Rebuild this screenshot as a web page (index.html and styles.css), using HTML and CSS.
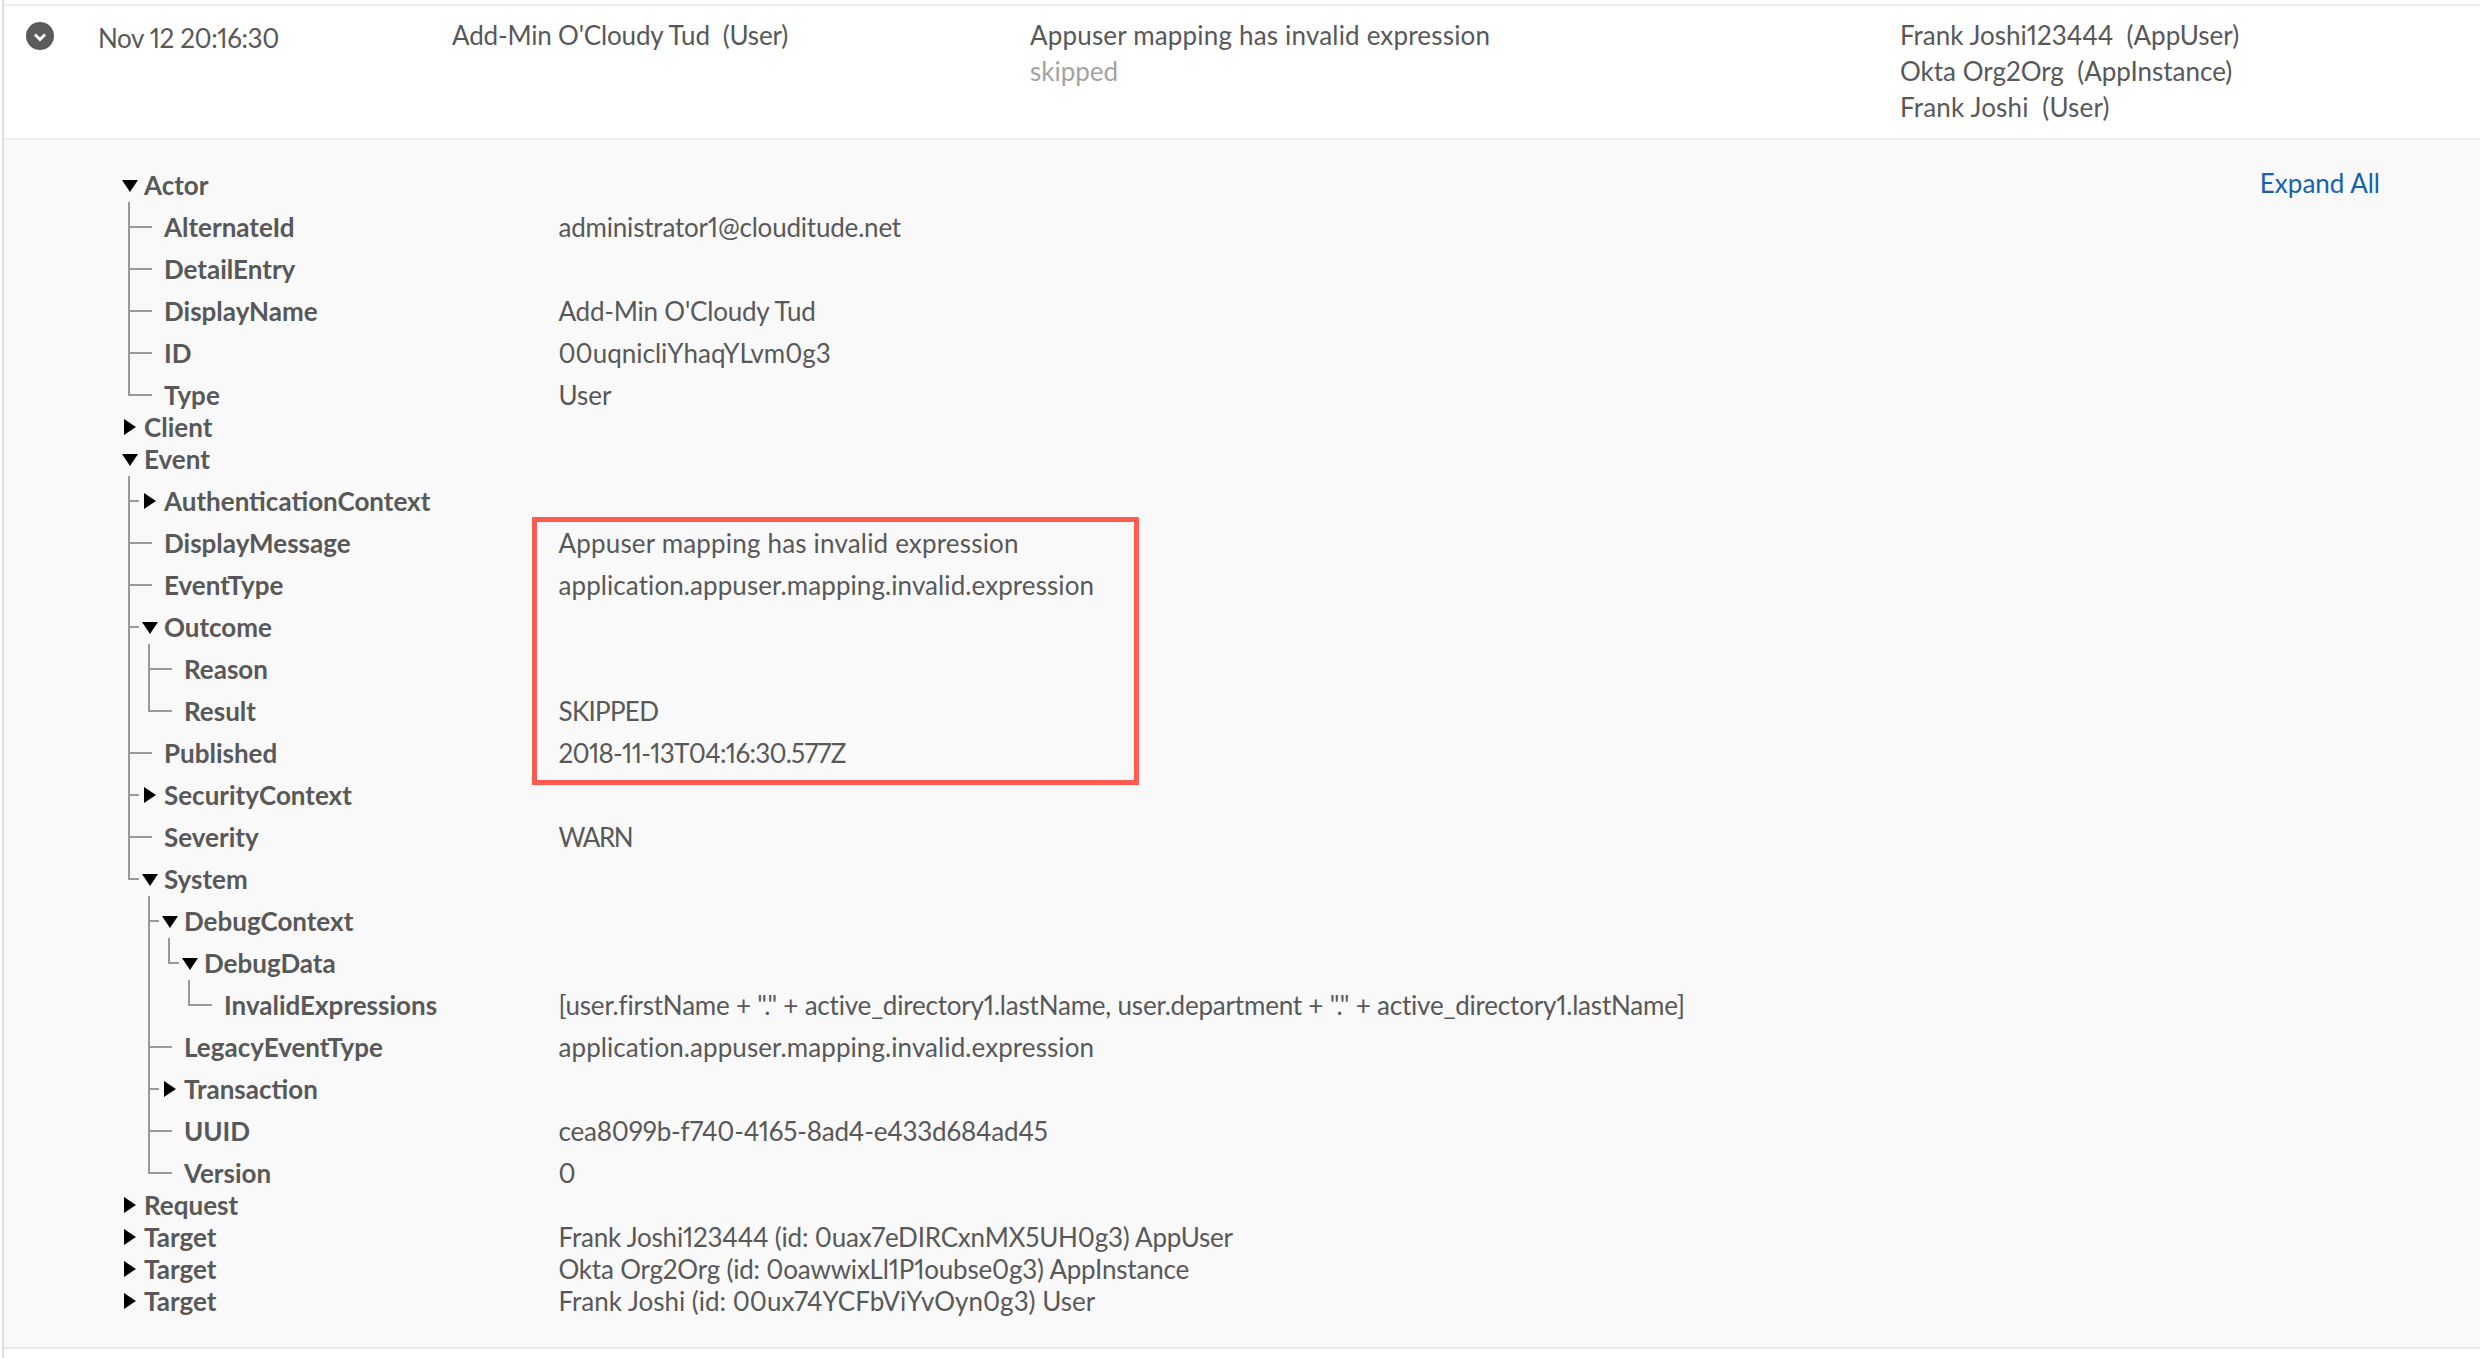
FILE: index.html
```html
<!DOCTYPE html>
<html lang="en">
<head>
<meta charset="utf-8">
<title>System Log</title>
<link rel="stylesheet" href="styles.css">
</head>
<body>
<div class="log">
  <div class="entry">
    <div class="cell-icon">
      <svg class="chev" viewBox="0 0 28 28" width="28" height="28"><circle cx="14" cy="14" r="14" fill="#5b5b5b"/><path d="M9 12.500l5 5 5-5" fill="none" stroke="#fff" stroke-width="3"/></svg>
    </div>
    <div class="cell-date">Nov 12 20:16:30</div>
    <div class="cell-actor">Add-Min O'Cloudy Tud&nbsp; (User)</div>
    <div class="cell-event">
      <div class="wide">Appuser mapping has invalid expression</div>
      <div class="muted">skipped</div>
    </div>
    <div class="cell-targets">
      <div>Frank Joshi123444&nbsp; (AppUser)</div>
      <div>Okta Org2Org&nbsp; (AppInstance)</div>
      <div class="wide">Frank Joshi&nbsp; (User)</div>
    </div>
  </div>
  <div class="panel">
    <ul class="tree">
      <li>
        <div class="row"><i class="down"></i><span class="lbl">Actor</span></div>
        <ul class="sub">
          <li><div class="row"><span class="lbl">AlternateId</span><span class="val tight">administrator1@clouditude.net</span></div></li>
          <li><div class="row"><span class="lbl">DetailEntry</span></div></li>
          <li><div class="row"><span class="lbl">DisplayName</span><span class="val tight">Add-Min O'Cloudy Tud</span></div></li>
          <li><div class="row"><span class="lbl">ID</span><span class="val">00uqnicliYhaqYLvm0g3</span></div></li>
          <li><div class="row"><span class="lbl">Type</span><span class="val">User</span></div></li>
        </ul>
      </li>
      <li><div class="row"><i class="right"></i><span class="lbl">Client</span></div></li>
      <li>
        <div class="row"><i class="down"></i><span class="lbl">Event</span></div>
        <ul class="sub">
          <li class="tog"><div class="row"><i class="right"></i><span class="lbl">AuthenticationContext</span></div></li>
          <li><div class="row"><span class="lbl">DisplayMessage</span><span class="val wide">Appuser mapping has invalid expression</span></div></li>
          <li><div class="row"><span class="lbl">EventType</span><span class="val slight">application.appuser.mapping.invalid.expression</span></div></li>
          <li class="tog">
            <div class="row"><i class="down"></i><span class="lbl">Outcome</span></div>
            <ul class="sub">
              <li><div class="row"><span class="lbl">Reason</span></div></li>
              <li><div class="row"><span class="lbl">Result</span><span class="val tighter">SKIPPED</span></div></li>
            </ul>
          </li>
          <li><div class="row"><span class="lbl">Published</span><span class="val tighter">2018-11-13T04:16:30.577Z</span></div></li>
          <li class="tog"><div class="row"><i class="right"></i><span class="lbl">SecurityContext</span></div></li>
          <li><div class="row"><span class="lbl">Severity</span><span class="val tightest">WARN</span></div></li>
          <li class="tog">
            <div class="row"><i class="down"></i><span class="lbl">System</span></div>
            <ul class="sub">
              <li class="tog">
                <div class="row"><i class="down"></i><span class="lbl">DebugContext</span></div>
                <ul class="sub">
                  <li class="tog">
                    <div class="row"><i class="down"></i><span class="lbl">DebugData</span></div>
                    <ul class="sub">
                      <li><div class="row"><span class="lbl">InvalidExpressions</span><span class="val tight">[user.firstName + "." + active_directory1.lastName, user.department + "." + active_directory1.lastName]</span></div></li>
                    </ul>
                  </li>
                </ul>
              </li>
              <li><div class="row"><span class="lbl">LegacyEventType</span><span class="val slight">application.appuser.mapping.invalid.expression</span></div></li>
              <li class="tog"><div class="row"><i class="right"></i><span class="lbl">Transaction</span></div></li>
              <li><div class="row"><span class="lbl">UUID</span><span class="val tight">cea8099b-f740-4165-8ad4-e433d684ad45</span></div></li>
              <li><div class="row"><span class="lbl">Version</span><span class="val">0</span></div></li>
            </ul>
          </li>
        </ul>
      </li>
      <li><div class="row"><i class="right"></i><span class="lbl">Request</span></div></li>
      <li><div class="row"><i class="right"></i><span class="lbl">Target</span><span class="val tight">Frank Joshi123444 (id: 0uax7eDIRCxnMX5UH0g3) AppUser</span></div></li>
      <li><div class="row"><i class="right"></i><span class="lbl">Target</span><span class="val tight">Okta Org2Org (id: 0oawwixLl1P1oubse0g3) AppInstance</span></div></li>
      <li><div class="row"><i class="right"></i><span class="lbl">Target</span><span class="val">Frank Joshi (id: 00ux74YCFbViYvOyn0g3) User</span></div></li>
    </ul>
    <a class="expand" href="#">Expand All</a>
    <div class="highlight"></div>
  </div>
</div>
</body>
</html>
```
FILE: styles.css
```css
* { box-sizing: border-box; }
html, body { margin: 0; padding: 0; background: #fff; }
body {
  font-family: Lato, "Open Sans", sans-serif;
  font-size: 26px;
  font-variant-numeric: proportional-nums;
  color: #585858;
  width: 2480px;
  height: 1358px;
  overflow: hidden;
}
.log {
  margin-left: 2px;
  padding-top: 4px;
  border-left: 2px solid #dedede;
  height: 1358px;
}
.entry {
  display: flex;
  height: 136px;
  border-top: 2px solid #eee;
  border-bottom: 2px solid #eee;
  background: #fff;
  line-height: 36px;
  padding-top: 11px;
}
.cell-icon { width: 94px; padding: 5px 0 0 22px; }
.chev { display: block; }
.cell-date { width: 354px; padding-top: 3px; letter-spacing: -0.4px; }
.cell-actor { width: 578px; letter-spacing: -0.17px; }
.cell-event { width: 870px; }
.cell-targets { flex: 1; }
.muted { color: #a3a3a3; }
.wide { letter-spacing: 0.18px; }
.slight { letter-spacing: 0.08px; }
.tight { letter-spacing: -0.2px; }
.tighter { letter-spacing: -0.7px; }
.tightest { letter-spacing: -1.5px; }

.panel {
  position: relative;
  display: flex;
  align-items: flex-start;
  background: #f9f9f9;
  border-bottom: 2px solid #e9e9e9;
  padding: 29px 100px 30px 118px;
}
.tree { flex: 1; }
.tree, .sub { list-style: none; margin: 0; padding: 0; }
.sub { margin-left: 20px; }
.row { display: flex; height: 32px; line-height: 32px; white-space: nowrap; position: relative; }
.lbl { width: 436px; padding-left: 22px; font-weight: 700; }
.sub .lbl { width: 416px; }
.sub .sub .lbl { width: 396px; }
.sub .sub .sub .lbl { width: 376px; }
.sub .sub .sub .sub .lbl { width: 356px; }
.val { padding-left: 0.5px; }
.row i { position: absolute; width: 0; height: 0; }
.down {
  left: 0;
  top: 11px;
  border-left: 8px solid transparent;
  border-right: 8px solid transparent;
  border-top: 12px solid #000;
}
.right {
  left: 2px;
  top: 8px;
  border-top: 8px solid transparent;
  border-bottom: 8px solid transparent;
  border-left: 12px solid #000;
}
.sub > li { position: relative; margin-top: 10px; }
.sub > li::before {
  content: "";
  position: absolute;
  left: -14px;
  top: -10px;
  width: 2px;
  height: calc(100% + 10px);
  background: #999;
}
.sub > li:first-child::before { top: -9px; height: calc(100% + 9px); }
.sub > li:last-child::before { height: 27px; }
.sub > li:first-child:last-child::before { height: 26px; }
.sub > li::after {
  content: "";
  position: absolute;
  left: -14px;
  top: 15px;
  width: 24px;
  height: 2px;
  background: #999;
}
.sub > li.tog::after { width: 11px; }
.expand {
  color: #1662b0;
  text-decoration: none;
  line-height: 32px;
  margin-top: -2px;
}
.highlight {
  position: absolute;
  left: 528px;
  top: 377px;
  width: 607px;
  height: 268px;
  border: 5px solid #ff5a4f;
  pointer-events: none;
}
```
